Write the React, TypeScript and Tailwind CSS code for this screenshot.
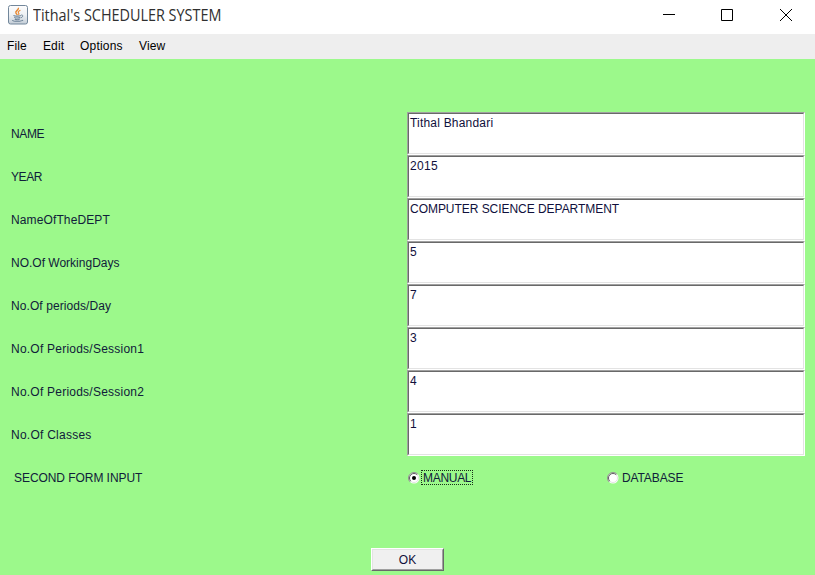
const fields = [
  { label: 'NAME', value: 'Tithal Bhandari', labelTrack: 'tracking-[-0.35px]', track: 'tracking-[0.2px]' },
  { label: 'YEAR', value: '2015', labelTrack: 'tracking-[-0.4px]', track: 'tracking-[0.3px]' },
  { label: 'NameOfTheDEPT', value: 'COMPUTER SCIENCE DEPARTMENT', labelTrack: 'tracking-[0.12px]', track: 'tracking-[-0.04px]' },
  { label: 'NO.Of WorkingDays', value: '5', labelTrack: 'tracking-normal', track: 'tracking-normal' },
  { label: 'No.Of periods/Day', value: '7', labelTrack: 'tracking-[0.08px]', track: 'tracking-normal' },
  { label: 'No.Of Periods/Session1', value: '3', labelTrack: 'tracking-[0.23px]', track: 'tracking-normal' },
  { label: 'No.Of Periods/Session2', value: '4', labelTrack: 'tracking-[0.23px]', track: 'tracking-normal' },
  { label: 'No.Of Classes', value: '1', labelTrack: 'tracking-[0.25px]', track: 'tracking-normal' },
];

function JavaIcon() {
  return (
    <svg width="20" height="20" viewBox="0 0 20 20" fill="none" className="block">
      <defs>
        <linearGradient id="tile" x1="0" y1="0" x2="0" y2="1">
          <stop offset="0" stopColor="#fdfdfd" />
          <stop offset="0.5" stopColor="#eef1f4" />
          <stop offset="1" stopColor="#c3cdd7" />
        </linearGradient>
      </defs>
      <rect x="0.5" y="0.5" width="19" height="18.5" rx="2" fill="url(#tile)" stroke="#72879b" />
      <path d="M10.4 2.8c1 2-3.6 3.2-2.5 5.2.4.8 1.2 1.2 1.3 2" stroke="#e8862e" strokeWidth="1.4" />
      <path d="M12.4 5.2c-3 1.2-2.3 2.3-1.6 3.2.5.7 0 1.2-.4 1.6" stroke="#e8862e" strokeWidth="1.1" />
      <path d="M5.5 10.4c1 1 6 .9 7.3.1M6.3 12.3c1 .9 4.7.9 6 .2M6.8 14c1 .7 3.7.7 4.8.2" stroke="#6b8196" strokeWidth="1.1" />
      <path d="M13.2 10c2.2-.3 2.2 2-.4 2.8" stroke="#6b8196" />
      <path d="M4.3 15.2c1 1.5 9.3 1.5 10.7-.2" stroke="#6b8196" strokeWidth="1.1" />
    </svg>
  );
}

function Radio({ checked }: { checked?: boolean }) {
  return (
    <svg width="12" height="12" viewBox="0 0 12 12" fill="none" className="block">
      <circle cx="6" cy="6" r="5.5" fill="#fff" />
      <path d="M2.1 9.9A5.5 5.5 0 0 1 9.9 2.1" stroke="#8f8f8f" />
      <path d="M2.8 9.2A4.5 4.5 0 0 1 9.2 2.8" stroke="#606060" />
      <path d="M9.2 2.8A4.5 4.5 0 0 1 2.8 9.2" stroke="#e3e3e3" />
      {checked && <circle cx="6" cy="6" r="2" fill="#000" />}
    </svg>
  );
}

export default function App() {
  return (
    <div className="flex h-[575px] w-[815px] flex-col overflow-hidden bg-[#9cf98b] font-['Liberation_Sans',Arial,sans-serif] text-xs text-[#10203a]">
      <header className="flex h-[34px] shrink-0 items-start bg-white pl-2">
        <div className="pt-[5px]"><JavaIcon /></div>
        <h1 className="ml-[5px] mt-[5px] origin-left scale-x-90 whitespace-nowrap font-['Open_Sans','Noto_Sans',sans-serif] text-base leading-[21px] text-[#303030]">
          Tithal's SCHEDULER SYSTEM
        </h1>
        <div className="ml-auto mr-[22px] mt-2 flex gap-[45px] text-black">
          <svg width="14" height="14" viewBox="0 0 14 14" stroke="currentColor" fill="none"><path d="M2 6.5h12" /></svg>
          <svg width="14" height="14" viewBox="0 0 14 14" stroke="currentColor" fill="none"><path d="M1.5 1.5h11v11h-11z" /></svg>
          <svg width="14" height="14" viewBox="0 0 14 14" stroke="currentColor" fill="none"><path d="m1 1 12 12M13 1 1 13" /></svg>
        </div>
      </header>
      <nav className="flex h-[25px] shrink-0 items-center bg-[#eeeeee] pb-0.5 pl-[7px] text-black">
        <span className="w-9 tracking-[0.1px]">File</span>
        <span className="w-[37px] tracking-[0.1px]">Edit</span>
        <span className="w-[59px] tracking-[0.2px]">Options</span>
        <span className="tracking-[0.1px]">View</span>
      </nav>
      <main className="flex flex-col pl-[11px] pr-[10px] pt-[53px]">
        {fields.map((f) => (
          <div key={f.label} className="flex h-[43px] items-center">
            <label className={`w-[396px] whitespace-nowrap ${f.labelTrack}`}>{f.label}</label>
            <div className="h-[43px] w-[398px] border border-b-white border-l-[#a0a0a0] border-r-white border-t-[#a0a0a0]">
              <div className="h-full border border-b-[#e3e3e3] border-l-[#696969] border-r-[#e3e3e3] border-t-[#696969] bg-white pl-px pt-px text-[#10103c]">
                <div className={`whitespace-nowrap leading-4 ${f.track}`}>{f.value}</div>
              </div>
            </div>
          </div>
        ))}
        <div className="flex h-[43px] items-center">
          <span className="w-[397px] pl-[3px] tracking-[-0.06px]">SECOND FORM INPUT</span>
          <div className="flex w-[199px] items-center">
            <Radio checked />
            <span className="ml-px h-[15px] w-[52px] border border-dotted border-[#183018] pl-px leading-[14px] tracking-[-0.3px]">MANUAL</span>
          </div>
          <div className="flex items-center">
            <Radio />
            <span className="ml-[3px] tracking-[-0.12px]">DATABASE</span>
          </div>
        </div>
      </main>
      <div className="flex pl-[371px] pt-[49px]">
        <button className="h-[23px] w-[73px] border border-b-[#696969] border-l-white border-r-[#696969] border-t-white bg-[#f0f0f0] text-[#10103c]">
          <span className="flex h-full items-center justify-center border border-b-[#a0a0a0] border-l-[#e3e3e3] border-r-[#a0a0a0] border-t-[#e3e3e3]">OK</span>
        </button>
      </div>
    </div>
  );
}
